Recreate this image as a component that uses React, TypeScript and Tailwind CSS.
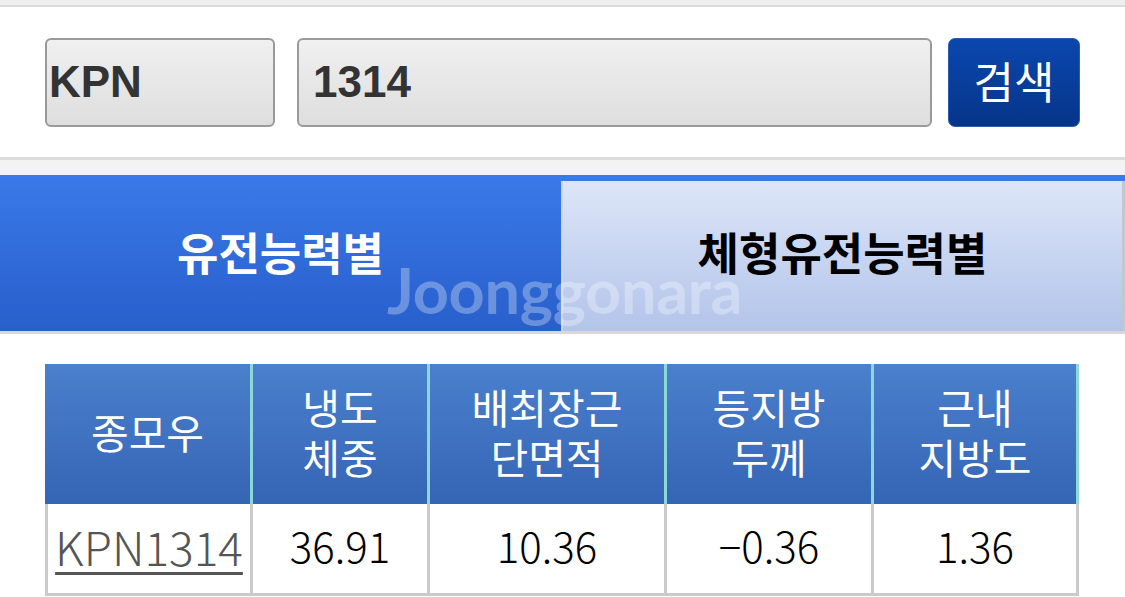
const HEADERS: string[][] = [["종모우"], ["냉도", "체중"], ["배최장근", "단면적"], ["등지방", "두께"], ["근내", "지방도"]];
const COLS = ["w-[208px]", "w-[177px]", "w-[237px]", "w-[207px]", "w-[205px]"];
const VALUES = ["36.91", "10.36", "-0.36", "1.36"];

const kr = { fontFamily: '"Noto Sans CJK KR", "Noto Sans", sans-serif' };
const latin = { fontFamily: '"Liberation Sans", Arial, sans-serif' };

function Field({ value, className }: { value: string; className: string }) {
  return (
    <div
      className={`flex h-[89px] items-center rounded-[6px] border-2 border-[#9a9a9a] bg-gradient-to-b from-[#f0f0f0] to-[#dedede] ${className}`}
    >
      <span className="text-[44px] font-bold leading-none text-[#333]" style={latin}>
        {value}
      </span>
    </div>
  );
}

export default function App() {
  return (
    <div className="h-[597px] w-[1125px] overflow-hidden bg-white" style={kr}>
      <div className="h-[7px] border-b-2 border-[#dcdcdc] bg-[#efefef]" />

      {/* search bar */}
      <div className="flex h-[150px] items-center pl-[45px]">
        <Field value="KPN" className="w-[230px] pl-[2px]" />
        <Field value="1314" className="ml-[22px] w-[635px] pl-[14px]" />
        <button
          type="button"
          className="ml-[16px] flex h-[89px] w-[132px] items-center justify-center rounded-[7px] border border-[#2b5bb3] bg-gradient-to-b from-[#0b47ad] to-[#06358a] pb-[4px] text-[44px] leading-none text-white"
          style={kr}
        >
          검색
        </button>
      </div>

      <div className="h-[3px] bg-[#dcdcdc]" />
      <div className="h-[15px] bg-[#f3f3f3]" />

      {/* tabs */}
      <div className="relative flex h-[156px] bg-gradient-to-b from-[#3a79e9] to-[#285fcb]">
        <div className="flex w-[561px] items-center justify-center pb-[4px] text-[45px] font-bold leading-none text-white">
          유전능력별
        </div>
        <div className="mt-[6px] flex flex-1 items-center justify-center border-l-2 border-r-[3px] border-l-[#cfd5df] border-r-[#c4c7cc] bg-gradient-to-b from-[#dde6f8] to-[#b3c4ea] pb-[10px] text-[45px] font-bold leading-none text-black">
          체형유전능력별
        </div>
        <span
          className="pointer-events-none absolute left-[387px] top-[83px] text-[63px] font-bold leading-none tracking-[-0.3px] text-white/30"
          style={{ fontFamily: 'Lato, "Open Sans", sans-serif' }}
        >
          Joonggonara
        </span>
      </div>
      <div className="h-[3px] bg-[#d8d8d8]" />

      {/* result table */}
      <div className="pl-[45px] pt-[30px]">
        <div className="flex">
          {HEADERS.map((lines, i) => (
            <div
              key={i}
              className={`flex h-[140px] flex-col items-center justify-center border-r-[3px] border-[#8cd8d5] bg-gradient-to-b from-[#4a80cd] to-[#3565b5] pb-[6px] text-[41px] text-white ${COLS[i]}`}
            >
              {lines.map((l) => (
                <div key={l} className="h-[50px] leading-[50px]">
                  {l}
                </div>
              ))}
            </div>
          ))}
        </div>
        <div className="flex">
          <div
            className={`flex h-[92px] items-center justify-center border-x-[3px] border-b-[3px] border-[#cacaca] pb-[6px] ${COLS[0]}`}
          >
            <span className="text-[46px] font-light leading-none text-[#555] underline decoration-[3px] underline-offset-[6px]">
              KPN1314
            </span>
          </div>
          {VALUES.map((v, i) => (
            <div
              key={v}
              className={`flex h-[92px] items-center justify-center border-r-[3px] border-b-[3px] border-[#cacaca] pb-[8px] text-[42px] font-light leading-none text-black ${COLS[i + 1]}`}
            >
              {v.startsWith("-") ? "−" + v.slice(1) : v}
            </div>
          ))}
        </div>
      </div>
    </div>
  );
}
